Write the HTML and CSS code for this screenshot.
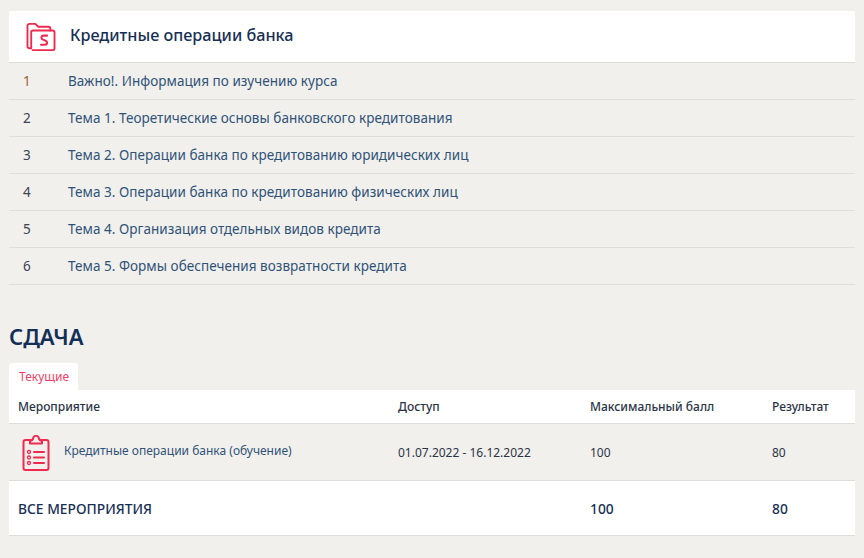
FILE: index.html
```
<!DOCTYPE html>
<html lang="ru">
<head>
<meta charset="utf-8">
<title>Кредитные операции банка</title>
<link rel="stylesheet" href="styles.css">
</head>
<body>
<section class="course">
  <header class="course-head">
    <svg class="folder-icon" width="30" height="28" viewBox="0 0 32 30" fill="none" stroke="#ee2a4f" stroke-width="2" stroke-linejoin="round" stroke-linecap="round">
      <path d="M5 27H3.500a2 2 0 0 1-2-2V3a2 2 0 0 1 2-2h6.500l3 3h11a2 2 0 0 1 2 2v2"/>
      <path d="M5.500 27V10a2 2 0 0 1 2-2h21a2 2 0 0 1 2 2v17a2 2 0 0 1-2 2H7"/>
      <path d="M22.500 13.500h-4a2.200 2.200 0 0 0-2 2.200c0 1.400 1 2 2.200 2.400l1.800.6c1.300.4 2 1 2 2.300a2.300 2.300 0 0 1-2.300 2.300h-4.200" stroke-width="2.200"/>
    </svg>
    <h1 class="course-title">Кредитные операции банка</h1>
  </header>
  <ol class="topics">
    <li class="topic"><span class="topic-num topic-num-active">1</span><a class="topic-link">Важно!. Информация по изучению курса</a></li>
    <li class="topic"><span class="topic-num">2</span><a class="topic-link">Тема 1. Теоретические основы банковского кредитования</a></li>
    <li class="topic"><span class="topic-num">3</span><a class="topic-link">Тема 2. Операции банка по кредитованию юридических лиц</a></li>
    <li class="topic"><span class="topic-num">4</span><a class="topic-link">Тема 3. Операции банка по кредитованию физических лиц</a></li>
    <li class="topic"><span class="topic-num">5</span><a class="topic-link">Тема 4. Организация отдельных видов кредита</a></li>
    <li class="topic"><span class="topic-num">6</span><a class="topic-link">Тема 5. Формы обеспечения возвратности кредита</a></li>
  </ol>
</section>
<section class="exams">
  <h2 class="exams-title">СДАЧА</h2>
  <div class="tabs"><span class="tab">Текущие</span></div>
  <div class="row row-head">
    <span>Мероприятие</span><span>Доступ</span><span>Максимальный балл</span><span>Результат</span>
  </div>
  <div class="row row-item">
    <span class="event">
      <svg class="clip-icon" width="28" height="36" viewBox="0 0 28 36" fill="none" stroke="#ee2a4f" stroke-width="2" stroke-linejoin="round" stroke-linecap="round">
        <path d="M8 5H3.500a2 2 0 0 0-2 2v26a2 2 0 0 0 2 2h21a2 2 0 0 0 2-2V7a2 2 0 0 0-2-2H20"/>
        <path d="M8 8.500V5.500c2 0 3-1 3.200-2.500a2.900 2.900 0 0 1 5.600 0c.2 1.500 1.200 2.500 3.200 2.500v3z"/>
        <circle cx="7" cy="17" r="1.500" stroke-width="1.300"/>
        <circle cx="7" cy="22.500" r="1.500" stroke-width="1.300"/>
        <circle cx="7" cy="28" r="1.500" stroke-width="1.300"/>
        <path d="M12 17h10M12 22.500h10M12 28h10"/>
      </svg>
      <a class="event-link">Кредитные операции банка (обучение)</a>
    </span>
    <span>01.07.2022 - 16.12.2022</span><span>100</span><span>80</span>
  </div>
  <div class="row row-total">
    <span>ВСЕ МЕРОПРИЯТИЯ</span><span></span><span>100</span><span>80</span>
  </div>
</section>
</body>
</html>
```
FILE: styles.css
```
* { box-sizing: border-box; }
html, body { height: 100%; }
body {
  margin: 0;
  padding: 11px 9px 0;
  background: #f2f0ed;
  font-family: "Noto Sans", "Open Sans", sans-serif;
  font-size: 12px;
  color: #2b3446;
  overflow: hidden;
}
.course-head {
  display: flex;
  align-items: center;
  gap: 14px;
  height: 52px;
  padding: 0 0 3px 17px;
  background: #fff;
  border-bottom: 1px solid #e0dedb;
}
.folder-icon { flex: none; margin-top: 3px; }
.course-title {
  margin: 0;
  font-size: 16.200px;
  font-weight: 500;
  color: #172f55;
}
.topics { margin: 0; padding: 0; list-style: none; }
.topic {
  display: flex;
  align-items: center;
  height: 37px;
  padding-left: 14px;
  border-bottom: 1px solid #e0dedb;
}
.topic-num { width: 45px; font-size: 13.500px; color: #3a4354; }
.topic-num-active { color: #a0622a; }
.topic-link { font-size: 13.500px; letter-spacing: 0.04px; color: #2f5378; margin-bottom: 1px; }
.exams-title {
  margin: 38px 0 14px;
  font-size: 22px;
  line-height: 26px;
  font-weight: 600;
  color: #122f57;
}
.tabs { display: flex; }
.tab {
  display: flex;
  align-items: center;
  width: 69px;
  height: 27px;
  padding-left: 10px;
  background: #fff;
  border-radius: 3px 3px 0 0;
  color: #ee3f68;
}
.row {
  display: grid;
  grid-template-columns: 380px 192px 182px 1fr;
  align-items: center;
  padding-left: 9px;
  border-bottom: 1px solid #e0dedb;
}
.row-head {
  height: 34px;
  background: #fff;
  font-weight: 500;
  color: #2b3446;
}
.row-item { height: 57px; }
.row-total {
  height: 55px;
  background: #fff;
  font-size: 13.800px;
  font-weight: 500;
  color: #172f55;
}
.event { display: flex; align-items: center; gap: 14px; }
.clip-icon { flex: none; margin: 1px 0 0 4px; }
.event-link { color: #2f5378; margin-top: -3px; }
```
